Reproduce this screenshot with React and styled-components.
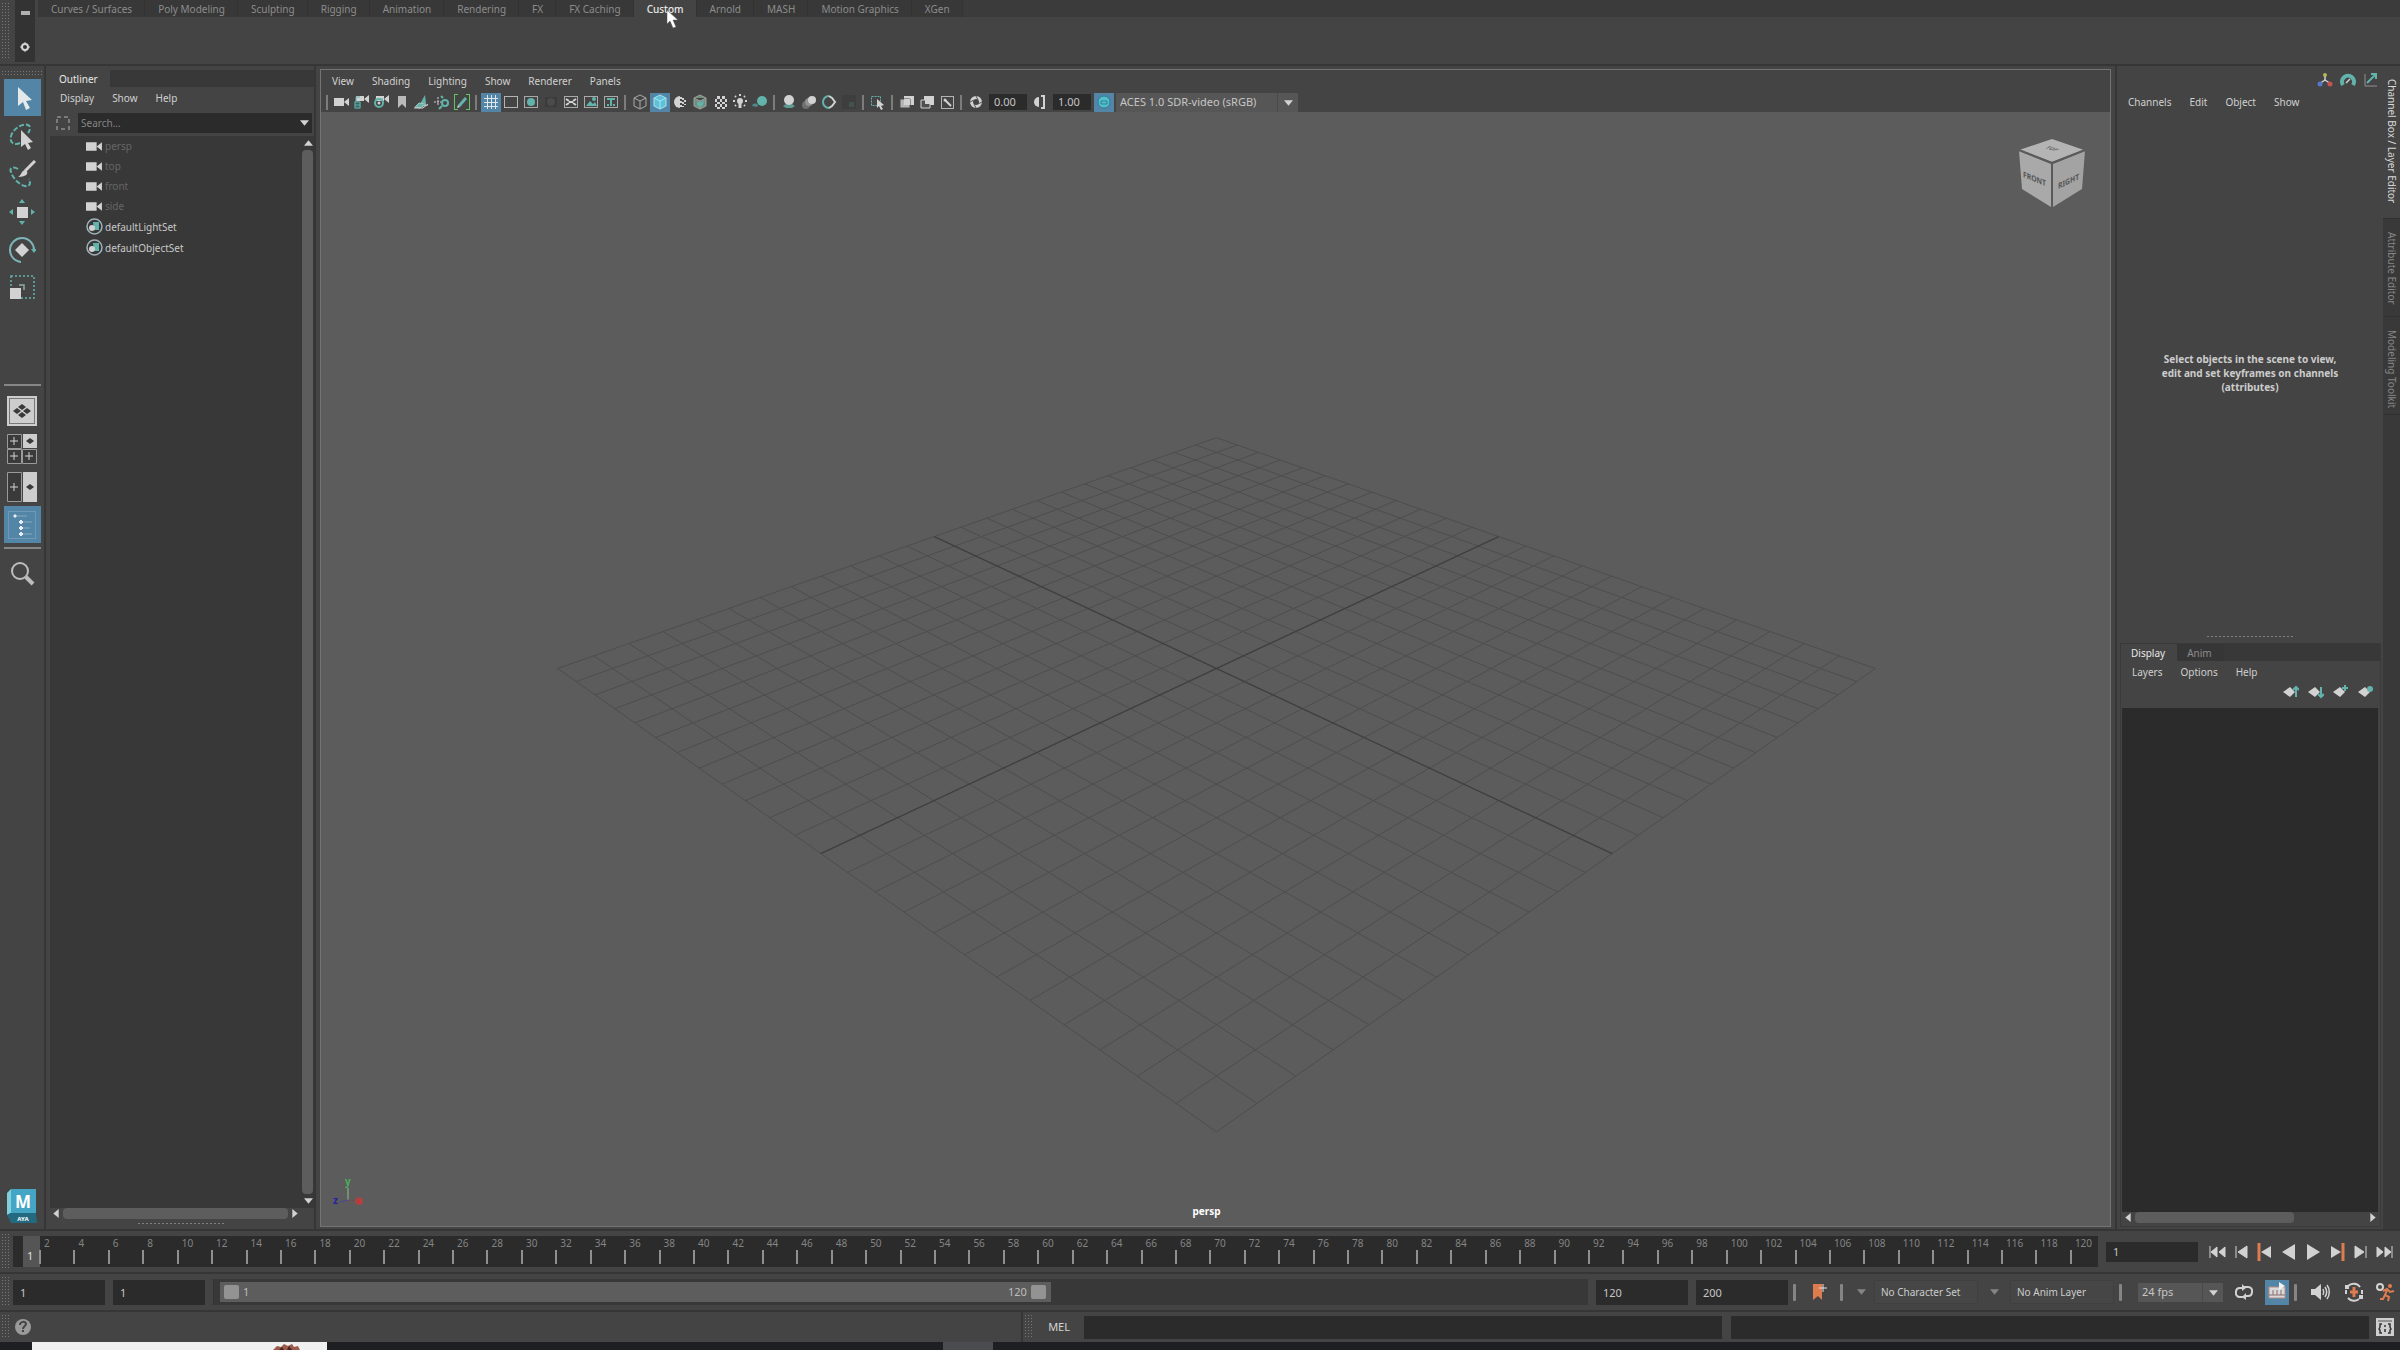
import { useState } from "react";
import styled, { createGlobalStyle } from "styled-components";

const GlobalStyle = createGlobalStyle`
  :root {
    --bg: #444444;
    --bg-dark: #383838;
    --bg-field: #2b2b2b;
    --bg-canvas: #5c5c5c;
    --line: #363636;
    --text: #c6c6c6;
    --text-dim: #8c8c8c;
    --accent: #5285a6;
    --main-font: "Noto Sans", "Open Sans", sans-serif;
  }
  * {
    box-sizing: border-box;
  }
  body {
    margin: 0;
    background-color: var(--bg);
    color: var(--text);
    font-family: var(--main-font);
    font-size: 11px;
    line-height: 16px;
  }
  button, input, select {
    margin: 0;
    padding: 0;
    border: 0;
    border-radius: 0;
    background: none;
    color: inherit;
    font: inherit;
    outline: none;
  }
  svg {
    display: block;
    flex: none;
  }
`;

const Page = styled.div`
  display: flex;
  flex-direction: column;
  height: 100vh;
  overflow: hidden;
`;

/* dotted drag handles */
const Grip = styled.div`
  flex: none;
  width: 8px;
  margin: 2px 2px 4px 1px;
  background-image: radial-gradient(#777 1px, transparent 1px);
  background-size: 3px 3px;
`;
const GripAcross = styled.div`
  height: 6px;
  width: 43px;
  background-image: radial-gradient(#777 1px, transparent 1px);
  background-size: 3px 3px;
`;
const SplitDots = styled.div`
  flex: none;
  width: 89px;
  height: 3px;
  margin: ${(props) => props.$top || 0}px auto 0;
  background-image: radial-gradient(#808080 1px, transparent 1px);
  background-size: 4px 3px;
`;

/* shelf */
const Shelf = styled.header`
  display: flex;
  flex: none;
  height: 66px;
  border-bottom: 2px solid var(--line);
`;
const ShelfSide = styled.div`
  display: flex;
  flex-direction: column;
  align-items: center;
  justify-content: space-between;
  width: 20px;
  height: 62px;
  margin: 0 3px 0 4px;
  padding: 5px 0 7px;
  background-color: #333333;
`;
const ShelfTabs = styled.nav`
  display: flex;
  flex: 1;
  height: 17px;
  background-color: #3b3b3b;
`;
const ShelfTab = styled.button`
  position: relative;
  padding: 0 12px 0 13px;
  height: 17px;
  line-height: 18px;
  font-size: 10px;
  border-right: 1px solid #333333;
  background-color: ${(props) => (props.$active ? "var(--bg)" : "#383838")};
  color: ${(props) => (props.$active ? "#e8e8e8" : "var(--text-dim)")};
  font-weight: ${(props) => (props.$active ? 500 : 400)};
`;
const Pointer = styled.svg`
  position: absolute;
  left: 32px;
  top: 9px;
  z-index: 2;
`;

const Main = styled.main`
  display: flex;
  flex: 1;
  min-height: 0;
`;

/* tool box */
const ToolBox = styled.aside`
  display: flex;
  flex-direction: column;
  align-items: center;
  flex: none;
  width: 46px;
  padding: 4px 0 6px;
  border-right: 2px solid var(--line);
`;
const Tools = styled.div`
  display: flex;
  flex-direction: column;
  gap: ${(props) => props.$gap || 0}px;
  margin-top: ${(props) => props.$top || 0}px;
`;
const ToolButton = styled.button`
  display: flex;
  align-items: center;
  justify-content: center;
  width: 37px;
  height: 37px;
  background-color: ${(props) => (props.$active ? "var(--accent)" : "transparent")};
`;
const ToolRule = styled.div`
  width: 37px;
  height: 2px;
  margin-top: ${(props) => props.$top}px;
  background-color: #878787;
`;
const Spacer = styled.div`
  flex: 1;
`;

/* menus */
const MenuBar = styled.nav`
  display: flex;
  align-items: center;
  flex: none;
  gap: 18px;
  height: ${(props) => props.$height}px;
  padding: 0 11px;
`;
const MenuButton = styled.button`
  font-size: 10px;
  line-height: 16px;
  color: #d0d0d0;
`;

/* outliner */
const Outliner = styled.section`
  display: flex;
  flex-direction: column;
  flex: none;
  width: 270px;
  padding: 4px 0 4px 3px;
  border-right: 2px solid var(--line);
`;
const TabStrip = styled.div`
  display: flex;
  flex: none;
  height: 17px;
  background-color: var(--bg-dark);
`;
const PanelTab = styled.button`
  padding: 0 12px 0 10px;
  height: 17px;
  font-size: 10px;
  background-color: ${(props) => (props.$active ? "var(--bg)" : "#363636")};
  color: ${(props) => (props.$active ? "#e8e8e8" : "var(--text-dim)")};
`;
const SearchRow = styled.label`
  display: flex;
  align-items: center;
  gap: 8px;
  height: 20px;
  margin: 4px 2px 3px 7px;
`;
const SearchField = styled.span`
  display: flex;
  align-items: center;
  flex: 1;
  height: 20px;
  padding: 0 3px;
  background-color: var(--bg-field);
  & > input {
    flex: 1;
    min-width: 0;
    font-size: 10px;
  }
  & > input::placeholder {
    color: #858585;
    opacity: 1;
  }
`;
const OutlinerBody = styled.div`
  display: flex;
  flex: 1;
  min-height: 0;
  margin-left: 1px;
  background-color: var(--bg-dark);
`;
const NodeList = styled.ul`
  flex: 1;
  margin: 0;
  padding: 0 0 0 36px;
  list-style: none;
`;
const NodeRow = styled.li`
  display: flex;
  align-items: center;
  gap: 2px;
  height: ${(props) => (props.$dim ? 20 : 21)}px;
  font-size: 10px;
  color: ${(props) => (props.$dim ? "#666666" : "#c8c8c8")};
`;
const ScrollColumn = styled.div`
  display: flex;
  flex-direction: column;
  align-items: center;
  width: 12px;
  padding: 4px 0;
  gap: 4px;
`;
const ScrollLine = styled.div`
  display: flex;
  align-items: center;
  flex: none;
  gap: 4px;
  height: 11px;
  margin: 0 ${(props) => props.$right}px 0 4px;
`;
const Thumb = styled.div`
  flex: ${(props) => props.$grow || 1} 1 0;
  align-self: stretch;
  width: ${(props) => (props.$column ? "11px" : "auto")};
  border-radius: 4px;
  background-color: #5d5d5d;
`;
const ThumbRest = styled.div`
  flex: ${(props) => props.$grow} 1 0;
`;

/* viewport */
const Viewport = styled.section`
  display: flex;
  flex-direction: column;
  flex: 1;
  min-width: 0;
  margin: 3px 0 2px 4px;
  border: 1px solid #747474;
`;
const ViewTools = styled.div`
  display: flex;
  align-items: center;
  flex: none;
  height: 20px;
  padding-left: 2px;
`;
const ViewButton = styled.button`
  display: flex;
  align-items: center;
  justify-content: center;
  flex: none;
  width: 20px;
  height: 19px;
  background-color: ${(props) => (props.$active ? "var(--accent)" : "transparent")};
`;
const ToolDivider = styled.div`
  flex: none;
  width: 2px;
  height: 15px;
  margin: 0 4px 0 3px;
  background-color: #7c7c7c;
`;
const NumberField = styled.input`
  flex: none;
  width: 38px;
  height: 16px;
  margin: 0 3px;
  padding-left: 5px;
  background-color: var(--bg-field);
`;
const SelectBox = styled.label`
  position: relative;
  display: block;
  flex: none;
  width: ${(props) => props.$width}px;
  height: 19px;
  margin-left: ${(props) => props.$left}px;
  background-color: #565656;
  & > select {
    appearance: none;
    width: 100%;
    height: 100%;
    padding: 0 24px 0 4px;
    border: 0;
  }
  & > svg {
    position: absolute;
    right: 5px;
    top: 7px;
    pointer-events: none;
  }
  &::after {
    content: "";
    position: absolute;
    right: 20px;
    top: 0;
    bottom: 0;
    width: 1px;
    background-color: #4a4a4a;
  }
`;
const Canvas = styled.div`
  position: relative;
  flex: 1;
  min-height: 0;
  background-color: var(--bg-canvas);
`;
const GridDrawing = styled.svg`
  width: 100%;
  height: 100%;
`;
const CubeHolder = styled.div`
  position: absolute;
  top: 25px;
  right: 23px;
`;
const AxisHolder = styled.div`
  position: absolute;
  left: 8px;
  bottom: 16px;
`;
const CameraName = styled.div`
  position: absolute;
  left: 0;
  right: 18px;
  bottom: 7px;
  text-align: center;
  font-size: 10px;
  font-weight: 700;
  color: #ffffff;
`;

/* channel box */
const ChannelBox = styled.section`
  display: flex;
  flex-direction: column;
  flex: none;
  width: 268px;
  margin-left: 4px;
  padding: 4px 0 2px;
  border-left: 2px solid var(--line);
`;
const CornerIcons = styled.div`
  display: flex;
  justify-content: flex-end;
  gap: 7px;
  height: 20px;
  padding: 2px 4px 0 0;
`;
const Message = styled.p`
  width: 190px;
  flex: 1;
  margin: 0 auto;
  padding-top: 238px;
  text-align: center;
  font-size: 10px;
  line-height: 14px;
  font-weight: 700;
  color: #cccccc;
`;
const LayerPanel = styled.div`
  display: flex;
  flex-direction: column;
  height: 584px;
  margin: 5px 2px 0 3px;
  padding-bottom: 3px;
  border: 1px solid #3a3a3a;
`;
const LayerTools = styled.div`
  display: flex;
  justify-content: flex-end;
  gap: 9px;
  height: 25px;
  padding: 0 6px 9px 0;
`;
const LayerList = styled.div`
  flex: 1;
  margin: 0 2px 0 1px;
  background-color: var(--bg-field);
`;
const SideTabs = styled.nav`
  display: flex;
  flex-direction: column;
  flex: none;
  width: 17px;
  background-color: #393939;
`;
const SideTab = styled.button`
  writing-mode: vertical-rl;
  width: 17px;
  height: ${(props) => props.$height}px;
  padding-top: 13px;
  text-align: left;
  font-size: 10px;
  line-height: 14px;
  border-bottom: 1px solid #303030;
  background-color: ${(props) => (props.$active ? "var(--bg)" : "#393939")};
  color: ${(props) => (props.$active ? "#d8d8d8" : "#868686")};
`;

/* bottom bars */
const BottomRow = styled.div`
  display: flex;
  align-items: center;
  flex: none;
  height: ${(props) => props.$height}px;
  border-top: 2px solid var(--line);
  & > ${Grip} {
    align-self: stretch;
    margin-right: 4px;
  }
`;
const TimeTrack = styled.div`
  display: flex;
  flex: 1;
  height: 31px;
  margin-right: 8px;
  background-color: var(--bg-field);
`;
const CurrentFrame = styled.div`
  width: 17px;
  margin-left: 10px;
  padding: 12px 0 0 4px;
  background-color: #555555;
  color: #e0e0e0;
`;
const Tick = styled.div`
  position: relative;
  flex: ${(props) => (props.$last ? "0 0 27px" : "1 1 0")};
  min-width: 0;
  padding-left: 4px;
  line-height: 14px;
  font-size: 10px;
  color: #848484;
  &::before {
    content: "";
    position: absolute;
    left: -1px;
    top: 14px;
    width: 2px;
    height: 14px;
    background-color: #8f8f8f;
  }
`;
const FrameField = styled.input`
  flex: none;
  width: 92px;
  height: ${(props) => props.$height || 25}px;
  margin-right: ${(props) => (props.$last ? 0 : 8)}px;
  padding-left: 7px;
  background-color: var(--bg-field);
`;
const Playback = styled.div`
  display: flex;
  align-items: center;
  flex: none;
  width: 194px;
  justify-content: space-between;
  padding: 0 6px 0 2px;
`;
const IconButton = styled.button`
  display: flex;
  align-items: center;
  justify-content: center;
  flex: none;
  width: ${(props) => props.$width || 20}px;
  height: 25px;
  background-color: ${(props) => (props.$active ? "var(--accent)" : "transparent")};
`;
const RangeTrack = styled.div`
  flex: 1;
  height: 26px;
  margin-right: 8px;
  padding: 3px 6px;
  background-color: var(--bg-dark);
  border-left: 1px solid #333333;
`;
const RangeBar = styled.div`
  display: flex;
  align-items: center;
  gap: 4px;
  width: 61%;
  height: 20px;
  padding: 0 5px 0 4px;
  background-color: #5d5d5d;
  color: #bdbdbd;
`;
const RangeHandle = styled.button`
  width: 15px;
  height: 14px;
  border-radius: 2px;
  background-color: #939393;
`;
const SetButton = styled.button`
  flex: none;
  width: 104px;
  height: 24px;
  padding-left: 6px;
  text-align: left;
  font-size: 10px;
  border: 1px solid #404040;
  background-color: #464646;
  color: #cccccc;
`;
const BarDivider = styled.div`
  flex: none;
  width: 3px;
  height: 17px;
  margin: 0 5px;
  border-radius: 1px;
  background-color: #858585;
`;
const HelpLine = styled.div`
  display: flex;
  align-items: center;
  flex: 1009 1 0;
  height: 100%;
  border-right: 2px solid var(--line);
`;
const CommandLine = styled.label`
  display: flex;
  align-items: center;
  flex: 686 1 0;
  & > span {
    flex: none;
    width: 48px;
    padding-left: 12px;
    color: #d4d4d4;
  }
  & > input {
    flex: 1;
    min-width: 0;
    height: 23px;
    background-color: var(--bg-field);
  }
`;
const CommandResult = styled.output`
  flex: 639 1 0;
  height: 23px;
  margin-left: 9px;
  background-color: var(--bg-field);
`;
const TaskBar = styled.footer`
  display: flex;
  flex: none;
  height: 8px;
  padding-left: 32px;
  background-color: #1d1f23;
`;
const TaskWindow = styled.div`
  display: flex;
  justify-content: flex-end;
  width: 295px;
  padding: 2px 27px 0 0;
  background-color: #f0f0f0;
`;
const TaskItem = styled.div`
  width: 50px;
  margin-left: 616px;
  background-color: #4a4c50;
`;

const W = "#d2d2d2";
const T = "#62b3ab";
const O = "#dd7c4f";

const Icon = ({ size = 16, box = 16, children }) => (
  <svg width={size} height={size} viewBox={`0 0 ${box} ${box}`} fill="none" aria-hidden="true">
    {children}
  </svg>
);

const Arrow = ({ dir = "down", color = W }) => {
  const points = {
    down: "0,0 10,0 5,6",
    up: "0,6 10,6 5,0",
    left: "6,0 6,10 0,5",
    right: "0,0 0,10 6,5",
  };
  const across = dir === "down" || dir === "up";
  return (
    <svg width={across ? 9 : 6} height={across ? 6 : 9} viewBox={across ? "0 0 10 6" : "0 0 6 10"}>
      <polygon points={points[dir]} fill={color} />
    </svg>
  );
};

const cameraShape = <path d="M0 4h10v8H0zM10 8l5-4v8z" fill={W} />;
const smallCamera = <path d="M2 2h8v5H2zM10 5l5-4v8z" fill={W} />;
const frame = <rect x="1.5" y="2.5" width="13" height="11" stroke="#a9a9a9" />;
const cube = (line, fill) => (
  <path d="M8 1l6 3v8l-6 3-6-3V4zM2 4l6 3 6-3M8 7v8" stroke={line} fill={fill} />
);

const viewIcons = {
  camera: cameraShape,
  lockCamera: (
    <>
      {smallCamera}
      <path d="M0 7h7v8H0z" fill="#3b5f5d" />
      <path d="M1 8h5v6H1zM1 11h5M2 8V3h4" stroke={T} />
    </>
  ),
  cameraAttr: (
    <>
      {smallCamera}
      <circle cx="5" cy="9" r="4" stroke={T} strokeWidth="2" />
      <path d="M1 5h8" stroke={T} />
      <circle cx="5" cy="9" r="1.5" fill={W} />
    </>
  ),
  bookmark: <path d="M4 2h8v12l-4-4-4 4z" fill="#b9b9b9" />,
  imagePlane: (
    <>
      <path d="M6 10l5-9 1 8z" fill={T} />
      <path d="M5 9l7 1-6 4-5-1zM8 12l6-1" fill={T} stroke="#a9c2bf" />
      <path d="M0 14h9l5-4" stroke={W} />
    </>
  ),
  panZoom: (
    <>
      <path d="M4 3v9M0 8h7" stroke={W} strokeDasharray="2 1" />
      <circle cx="11" cy="9" r="3" stroke={T} strokeWidth="2" />
      <path d="M9 4l-2-2M8 12l-3 3" stroke={T} strokeWidth="2" />
    </>
  ),
  pencil: (
    <>
      <path d="M4 0H0v16h4M12 0h4v16h-4" stroke="#64c264" strokeWidth="2" />
      <path d="M5 12l7-8" stroke={T} strokeWidth="3" />
      <path d="M3 14l1-3 2 2z" fill={W} />
    </>
  ),
  grid: (
    <path d="M1 4.5h14M1 8.5h14M1 12.5h14M4.5 1v14M8.5 1v14M12.5 1v14" stroke="#dde6ec" />
  ),
  filmGate: <rect x="1.5" y="2.5" width="13" height="11" stroke="#b4b4b4" />,
  resGate: (
    <>
      {frame}
      <circle cx="8" cy="8" r="4" fill={T} />
    </>
  ),
  gateMask: (
    <>
      <rect x="2" y="3" width="12" height="10" fill="#3b3b3b" />
      <circle cx="8" cy="8" r="4" fill="#4b4b4b" />
    </>
  ),
  fieldChart: (
    <>
      {frame}
      <path d="M3 5l3 2M13 5l-3 2M3 11l3-2M13 11l-3-2M6 8h4" stroke={W} strokeWidth="2" />
    </>
  ),
  safeAction: (
    <>
      {frame}
      <path d="M3 12l4-5 3 3 2-2 2 4z" fill={T} />
      <circle cx="11" cy="5" r="2" fill={T} />
    </>
  ),
  safeTitle: (
    <>
      {frame}
      <path d="M4 5h8M8 5v7M4 11h2M10 11h2" stroke={T} strokeWidth="2" />
    </>
  ),
  wireframe: cube("#aaaaaa", "none"),
  shaded: (
    <>
      <path d="M8 1l6 3v8l-6 3-6-3V4z" fill="#5fc0d8" />
      {cube("#a8e4f2", "none")}
    </>
  ),
  halfShaded: (
    <>
      <path d="M8 2a6 6 0 000 12z" fill={W} />
      <path d="M9 3v11M11 4v9M13 6v5" stroke={W} strokeDasharray="2 2" strokeWidth="2" />
    </>
  ),
  texturedCube: (
    <>
      {cube("#a0a0a0", "#6f8f7b")}
      <path d="M5 7l3 2 4-3-1 5-3 2-3-2z" fill={T} />
    </>
  ),
  checker: (
    <path
      d="M5 2h3v3H5zM10 2h3v3h-3zM3 5h2v3H3zM8 5h2v3H8zM13 5h2v3h-2zM5 8h3v2H5zM10 8h3v2h-3zM3 10h2v3H3zM8 10h2v3H8zM13 10h2v3h-2zM5 13h3v2H5zM10 13h3v2h-3z"
      fill={W}
    />
  ),
  light: (
    <>
      <circle cx="8" cy="7" r="3" fill={W} />
      <path d="M8 9v5" stroke={W} strokeWidth="3" />
      <path d="M8 0v2M1 7h2M13 7h2M3 2l1 1M13 2l-1 1M3 12l1-1M13 12l-1-1" stroke={W} strokeWidth="2" />
    </>
  ),
  shadow: (
    <>
      <circle cx="10" cy="7" r="5" fill={T} />
      <path d="M0 12c1-3 4-3 6-1l-1 2z" fill="#4f8a86" />
    </>
  ),
  ambient: (
    <>
      <path d="M2 12l3-2h6l3 2-3 2H5z" fill="#5f9a94" />
      <circle cx="8" cy="6" r="5" fill={W} />
    </>
  ),
  motionBlur: (
    <>
      <circle cx="5" cy="11" r="4" fill="#6f6f6f" />
      <circle cx="8" cy="8" r="4" fill="#919191" />
      <circle cx="11" cy="6" r="4" fill={W} />
    </>
  ),
  multisample: (
    <>
      <path d="M8 2a6 6 0 000 12" stroke={T} strokeWidth="2" />
      <path d="M8 2l3 2 3 4-3 4-3 2" stroke={W} strokeWidth="2" />
    </>
  ),
  depth: (
    <>
      <path d="M1 1h14v14H1z" fill="#3e3e3e" />
      <path d="M8 8h5v5H8z" fill="#41524f" />
    </>
  ),
  isolate: (
    <>
      <rect x="1.5" y="2.5" width="9" height="9" stroke={T} strokeDasharray="2 1" />
      <path d="M7 5l7 6-3 1 2 3-2 1-2-4-2 2z" fill={W} />
    </>
  ),
  xray: (
    <>
      <path d="M5 2h10v9H5z" fill={W} />
      <path d="M1 5h10v9H1z" fill="#b6b6b6" stroke="#4a4a4a" />
      <path d="M5 5h6v6H5z" fill={W} />
    </>
  ),
  xrayJoints: (
    <>
      <path d="M5 2h10v9H5z" fill={W} />
      <path d="M2 6h9v8H2z" fill="#505050" stroke={W} />
      <path d="M6 6h5v4H6z" fill={W} />
    </>
  ),
  xrayActive: (
    <>
      <rect x="2.5" y="2.5" width="12" height="12" stroke="#b4b4b4" />
      <path d="M6 6l6 6" stroke={W} strokeWidth="2" />
      <circle cx="6" cy="6" r="1.5" fill={W} />
    </>
  ),
  exposure: (
    <>
      <circle cx="8" cy="8" r="4.5" stroke={W} strokeWidth="3" />
      <path d="M8 2l2 4M14 8l-4 2M8 14l-2-4M2 8l4-2" stroke="#555" />
    </>
  ),
  gamma: (
    <>
      <path d="M7 3a5 5 0 000 10z" fill={W} />
      <path d="M9 2h3v12H9" stroke={W} strokeWidth="2" />
    </>
  ),
  color: (
    <>
      <circle cx="8" cy="8" r="6" fill="#53c0d0" stroke="#2f7f93" />
      <path d="M5 7h6v3H5z" stroke="#2f7f93" />
    </>
  ),
};

const viewGroups = [
  ["camera", "lockCamera", "cameraAttr", "bookmark", "imagePlane", "panZoom", "pencil"],
  ["grid", "filmGate", "resGate", "gateMask", "fieldChart", "safeAction", "safeTitle"],
  ["wireframe", "shaded", "halfShaded", "texturedCube", "checker", "light", "shadow"],
  ["ambient", "motionBlur", "multisample", "depth"],
  ["isolate"],
  ["xray", "xrayJoints", "xrayActive"],
];

const toolIcons = {
  Select: <path d="M10 3l14 13-6 1 4 7-4 2-3-8-5 4z" fill="#e4e9ec" />,
  Lasso: (
    <>
      <path d="M12 21C6 24 1 20 3 14 5 7 14 1 20 3c3 1 2 6 0 8" stroke={T} strokeWidth="2" strokeDasharray="5 2" />
      <path d="M13 8l12 12-5 1 3 5-3 2-3-6-4 3z" fill={W} />
    </>
  ),
  "Paint select": (
    <>
      <path d="M10 9C5 6 1 8 3 12c1 5 8 13 14 14 5 1 6-3 4-7" stroke={T} strokeWidth="2" strokeDasharray="5 2" />
      <path d="M27 1L17 11" stroke={W} strokeWidth="3" />
      <path d="M18 10c3 3 1 7-8 7 4-2 3-7 8-7z" fill={W} />
    </>
  ),
  Move: (
    <>
      <path d="M9 9h11v11H9z" fill={W} />
      <path d="M14 1l3 4h-6zM14 27l3-4h-6zM1 14l4-3v6zM27 14l-4-3v6z" fill={T} />
    </>
  ),
  Rotate: (
    <>
      <path d="M14 7l7 7-7 7-7-7z" fill={W} />
      <path d="M13 26A12 12 0 1126 14" stroke="#7db4b8" strokeWidth="2" />
      <path d="M23 13h6l-3 4z" fill={T} />
    </>
  ),
  Scale: (
    <>
      <rect x="3" y="2" width="23" height="22" stroke={T} strokeWidth="1.5" strokeDasharray="2 2" />
      <path d="M2 14h11v11H2z" fill={W} />
      <path d="M11 11h5v5" stroke="#8fa9a7" strokeWidth="1.5" />
    </>
  ),
};

const diamond = (x, y, r = 3) => `M${x - r} ${y}l${r} -${r - 1}l${r} ${r - 1}l-${r} ${r - 1}z`;
const plus = (x, y) => `M${x - 4} ${y}h8M${x} ${y - 4}v8`;

const layoutIcons = {
  "Single view": (
    <>
      <path d="M0 0h30v30H0z" fill="#cdcdcd" />
      <rect x="2.5" y="2.5" width="25" height="25" stroke="#777" />
      <path d={diamond(15, 11, 4) + diamond(10, 15, 4) + diamond(20, 15, 4) + diamond(15, 19, 4)} fill="#3a3a3a" />
    </>
  ),
  "Four view": (
    <>
      <path d="M.5.5h14v14H.5zM.5 15.5h14v14H.5zM15.5 15.5h14v14h-14z" fill="#3a3a3a" stroke="#9a9a9a" />
      <path d="M16 0h14v14H16z" fill="#cdcdcd" />
      <path d={plus(7, 7) + plus(7, 22) + plus(22, 22)} stroke={W} />
      <path d={diamond(23, 7, 4)} fill="#3a3a3a" />
    </>
  ),
  "Two view": (
    <>
      <path d="M.5.5h14v29H.5z" fill="#3a3a3a" stroke="#9a9a9a" />
      <path d="M16 0h14v30H16z" fill="#cdcdcd" />
      <path d={plus(7, 15)} stroke={W} />
      <path d={diamond(23, 15, 4)} fill="#3a3a3a" />
    </>
  ),
  "Outliner view": (
    <>
      <rect x="1.5" y="1.5" width="27" height="27" stroke="#6f9ab7" />
      <path d="M8 6h12M14 12h11M14 18h9M14 24h11" stroke="#83aac4" />
      <path d="M6 6l2-2 2 2-2 2z" fill="#e6eef3" />
      <path d="M12 12l2-2 2 2-2 2zM12 18l2-2 2 2-2 2zM12 24l2-2 2 2-2 2z" fill="#e6eef3" stroke="#e6eef3" />
    </>
  ),
};

const playIcons = {
  "Go to start": <path d="M2 4v12M9 5v10l-6-5zM17 5v10l-6-5z" fill={W} stroke={W} />,
  "Step back frame": <path d="M4 4v12M15 4v12L6 10z" fill={W} stroke={W} />,
  "Step back key": (
    <>
      <path d="M16 4v12L6 10z" fill={W} />
      <path d="M4 1v18" stroke={O} strokeWidth="3" />
    </>
  ),
  "Play backwards": <path d="M16 2v16L3 10z" fill={W} />,
  "Play forwards": <path d="M4 2v16l13-8z" fill={W} />,
  "Step forward key": (
    <>
      <path d="M4 4v12l10-6z" fill={W} />
      <path d="M16 1v18" stroke={O} strokeWidth="3" />
    </>
  ),
  "Step forward frame": <path d="M16 4v12M5 4v12l9-6z" fill={W} stroke={W} />,
  "Go to end": <path d="M18 4v12M11 5v10l6-5zM3 5v10l6-5z" fill={W} stroke={W} />,
};

const layerBase = <path d="M0 9l7-5 5 5-5 5z" fill={W} />;
const layerIcons = {
  "Move layer up": (
    <>
      {layerBase}
      <path d="M13 14V4M10 7l3-3 3 3" stroke={T} strokeWidth="2" />
    </>
  ),
  "Move layer down": (
    <>
      {layerBase}
      <path d="M13 4v10M10 11l3 3 3-3" stroke={T} strokeWidth="2" />
    </>
  ),
  "New empty layer": (
    <>
      {layerBase}
      <path d="M12 2v6M9 5h6" stroke={T} strokeWidth="2" />
    </>
  ),
  "New layer from selected": (
    <>
      {layerBase}
      <circle cx="12" cy="6" r="3" fill={T} />
    </>
  ),
};

const shelfTabs = [
  "Curves / Surfaces",
  "Poly Modeling",
  "Sculpting",
  "Rigging",
  "Animation",
  "Rendering",
  "FX",
  "FX Caching",
  "Custom",
  "Arnold",
  "MASH",
  "Motion Graphics",
  "XGen",
];

const nodes = [
  { name: "persp", camera: true },
  { name: "top", camera: true },
  { name: "front", camera: true },
  { name: "side", camera: true },
  { name: "defaultLightSet" },
  { name: "defaultObjectSet" },
];

const ticks = Array.from({ length: 60 }, (_, i) => (i + 1) * 2);

// ground plane: u and v run from -1 to 1 along the two world axes
const project = (u, v) => {
  const s = (u - v) / 2;
  const t = (u + v) / 2;
  const depth = 1 - 0.335 * t;
  return [896 + (659.5 * s) / depth, 557 + (308.4 * t) / depth];
};

const gridLines = [];
for (let i = -12; i <= 12; i++) {
  gridLines.push({ axis: i === 0, a: project(i / 12, -1), b: project(i / 12, 1) });
  gridLines.push({ axis: i === 0, a: project(-1, i / 12), b: project(1, i / 12) });
}
gridLines.sort((a, b) => a.axis - b.axis);

function GroundGrid() {
  return (
    <GridDrawing viewBox="0 0 1790 1115" role="img" aria-label="Ground grid">
      {gridLines.map(({ axis, a, b }, i) => (
        <line
          key={i}
          x1={a[0]}
          y1={a[1]}
          x2={b[0]}
          y2={b[1]}
          stroke={axis ? "#3f3f3f" : "#4d4d4d"}
          strokeWidth={axis ? 1.3 : 1}
        />
      ))}
    </GridDrawing>
  );
}

function ViewCube() {
  return (
    <svg width="70" height="72" viewBox="0 0 70 72" fontFamily="Noto Sans" fontSize="8" fontWeight="700">
      <path d="M35 2l32 11-32 12L2 13z" fill="#b4b4b4" />
      <path d="M2 14l32 13v43L5 52z" fill="#a9a9a9" />
      <path d="M68 14L36 27v43l29-18z" fill="#a3a3a3" />
      <path d="M2 13l33 13 33-13M35 26v43" stroke="#5a5a5a" strokeWidth="2" fill="none" />
      <text transform="matrix(.85 .35 0 1 6 40)" fill="#555555">FRONT</text>
      <text transform="matrix(.85 -.4 0 1 41 52)" fill="#555555">RIGHT</text>
      <text transform="matrix(.75 .25 -.8 .4 28 11)" fill="#6a6a6a" fontSize="7">TOP</text>
    </svg>
  );
}

function AxisGizmo() {
  return (
    <svg width="40" height="42" viewBox="0 -8 40 42" fontFamily="Noto Sans" fontSize="10" fontWeight="700">
      <path d="M19 12v12" stroke="#8cc08c" />
      <path d="M19 24l-8 2" stroke="#4646a8" />
      <path d="M19 24l8 1" stroke="#7a4a4a" />
      <circle cx="30" cy="25" r="4" fill="#a04848" />
      <text x="16" y="9" fill="#4cae5a">y</text>
      <text x="4" y="28" fill="#2222a8">z</text>
      <text x="28" y="28" fill="#d03030" fontSize="8">x</text>
    </svg>
  );
}

const Menu = ({ items, height, label }) => (
  <MenuBar $height={height} aria-label={label}>
    {items.map((item) => (
      <MenuButton key={item}>{item}</MenuButton>
    ))}
  </MenuBar>
);

export default function App() {
  const [shelf, setShelf] = useState("Custom");
  const [tool, setTool] = useState("Select");
  const [layout, setLayout] = useState("Outliner view");
  const [search, setSearch] = useState("");

  return (
    <>
      <GlobalStyle />
      <Page>
        <Shelf>
          <Grip />
          <ShelfSide>
            <svg width="9" height="15" viewBox="0 0 9 15">
              <path d="M0 6h9v4H0z" fill="#b0b0b0" />
            </svg>
            <svg width="10" height="16" viewBox="0 0 10 16">
              <circle cx="5" cy="8" r="3" fill="none" stroke={W} strokeWidth="2" />
              <path d="M5 3v2M5 11v2M0 8h2M8 8h2" stroke={W} />
            </svg>
          </ShelfSide>
          <ShelfTabs>
            {shelfTabs.map((name) => (
              <ShelfTab key={name} $active={shelf === name} onClick={() => setShelf(name)}>
                {name}
                {name === "Custom" && (
                  <Pointer width="12" height="20" viewBox="0 0 12 20">
                    <path d="M1 1v14l3-3 3 7 3-1-3-7h5z" fill="#fff" stroke="#555" strokeWidth=".5" />
                  </Pointer>
                )}
              </ShelfTab>
            ))}
          </ShelfTabs>
        </Shelf>

        <Main>
          <ToolBox>
            <GripAcross />
            <Tools $top={3} $gap={1}>
              {Object.keys(toolIcons).map((name) => (
                <ToolButton key={name} aria-label={name} $active={tool === name} onClick={() => setTool(name)}>
                  <Icon size={28} box={28}>{toolIcons[name]}</Icon>
                </ToolButton>
              ))}
            </Tools>
            <ToolRule $top={78} />
            <Tools $top={6} $gap={1}>
              {Object.keys(layoutIcons).map((name) => (
                <ToolButton key={name} aria-label={name} $active={layout === name} onClick={() => setLayout(name)}>
                  <Icon size={30} box={30}>{layoutIcons[name]}</Icon>
                </ToolButton>
              ))}
            </Tools>
            <ToolRule $top={4} />
            <Tools $top={5}>
              <ToolButton aria-label="Find">
                <Icon size={26} box={26}>
                  <circle cx="11" cy="11" r="8" stroke="#bdbdbd" strokeWidth="2" />
                  <path d="M17 17l7 7" stroke="#bdbdbd" strokeWidth="4" />
                </Icon>
              </ToolButton>
            </Tools>
            <Spacer />
            <svg width="30" height="34" viewBox="0 0 30 34" fontFamily="Noto Sans" fontWeight="700" textAnchor="middle">
              <path d="M0 4l4-4v24l-4 2z" fill="#7fd0dd" />
              <path d="M4 0h25v24H4z" fill="#44a6c4" />
              <path d="M0 26l4-2h25l1 10H4z" fill="#23697f" />
              <text x="16" y="19" fontSize="17" fill="#fff">M</text>
              <text x="16" y="32" fontSize="6" fill="#fff">AYA</text>
            </svg>
          </ToolBox>

          <Outliner>
            <TabStrip>
              <PanelTab $active>Outliner</PanelTab>
            </TabStrip>
            <Menu items={["Display", "Show", "Help"]} height={22} label="Outliner" />
            <SearchRow>
              <Icon size={14} box={14}>
                <rect x="1" y="1" width="12" height="12" stroke="#7a7a7a" strokeWidth="2" strokeDasharray="4 3" />
              </Icon>
              <SearchField>
                <input
                  type="text"
                  aria-label="Search"
                  placeholder="Search..."
                  value={search}
                  onChange={(e) => setSearch(e.target.value)}
                />
                <Arrow />
              </SearchField>
            </SearchRow>
            <OutlinerBody>
              <NodeList>
                {nodes.map(({ name, camera }) => (
                  <NodeRow key={name} $dim={camera}>
                    {camera ? (
                      <Icon size={17}>{cameraShape}</Icon>
                    ) : (
                      <Icon size={17} box={17}>
                        <circle cx="8.5" cy="8.5" r="7.5" stroke="#9fb2b8" strokeWidth="1.5" />
                        <path d="M7 4h6v8H8z" fill={T} />
                        <circle cx="6" cy="10" r="3" fill={W} />
                      </Icon>
                    )}
                    {name}
                  </NodeRow>
                ))}
              </NodeList>
              <ScrollColumn>
                <Arrow dir="up" />
                <Thumb $column />
                <Arrow />
              </ScrollColumn>
            </OutlinerBody>
            <ScrollLine $right={16}>
              <Arrow dir="left" />
              <Thumb />
              <Arrow dir="right" />
            </ScrollLine>
            <SplitDots $top={3} />
          </Outliner>

          <Viewport>
            <Menu
              items={["View", "Shading", "Lighting", "Show", "Renderer", "Panels"]}
              height={22}
              label="Viewport"
            />
            <ViewTools>
              {viewGroups.map((group) => [
                <ToolDivider key={`${group[0]}-divider`} />,
                ...group.map((name) => (
                  <ViewButton key={name} aria-label={name} $active={name === "grid" || name === "shaded"}>
                    <Icon>{viewIcons[name]}</Icon>
                  </ViewButton>
                )),
              ])}
              <ToolDivider />
              <ViewButton aria-label="Exposure">
                <Icon>{viewIcons.exposure}</Icon>
              </ViewButton>
              <NumberField aria-label="Exposure value" defaultValue="0.00" />
              <ViewButton aria-label="Gamma">
                <Icon>{viewIcons.gamma}</Icon>
              </ViewButton>
              <NumberField aria-label="Gamma value" defaultValue="1.00" />
              <ViewButton aria-label="Color management" $active>
                <Icon>{viewIcons.color}</Icon>
              </ViewButton>
              <SelectBox $width={182} $left={2}>
                <select aria-label="View transform" defaultValue="aces">
                  <option value="aces">ACES 1.0 SDR-video (sRGB)</option>
                </select>
                <Arrow />
              </SelectBox>
            </ViewTools>
            <Canvas>
              <GroundGrid />
              <CubeHolder>
                <ViewCube />
              </CubeHolder>
              <AxisHolder>
                <AxisGizmo />
              </AxisHolder>
              <CameraName>persp</CameraName>
            </Canvas>
          </Viewport>

          <ChannelBox>
            <CornerIcons>
              <Icon>
                <path d="M8 8V2M8 8l-6 4M8 8l6 4" stroke={W} strokeWidth="1.5" />
                <circle cx="8" cy="3" r="2" fill="#b9b55e" />
                <circle cx="3" cy="12" r="2.5" fill="#5577cc" />
                <circle cx="13" cy="12" r="2.5" fill="#c75252" />
              </Icon>
              <Icon>
                <path d="M3 13A6 6 0 1113 13" stroke={T} strokeWidth="4" />
                <path d="M6 11l4-4" stroke={W} strokeWidth="1.5" />
              </Icon>
              <Icon>
                <path d="M2 2v12h12" stroke="#8f8f8f" />
                <path d="M4 11l8-8M8 2h5v5" stroke={T} strokeWidth="2" />
              </Icon>
            </CornerIcons>
            <Menu items={["Channels", "Edit", "Object", "Show"]} height={24} label="Channel box" />
            <Message>Select objects in the scene to view, edit and set keyframes on channels (attributes)</Message>
            <SplitDots />
            <LayerPanel>
              <TabStrip>
                <PanelTab $active>Display</PanelTab>
                <PanelTab>Anim</PanelTab>
              </TabStrip>
              <Menu items={["Layers", "Options", "Help"]} height={22} label="Layers" />
              <LayerTools>
                {Object.keys(layerIcons).map((name) => (
                  <MenuButton key={name} aria-label={name}>
                    <Icon>{layerIcons[name]}</Icon>
                  </MenuButton>
                ))}
              </LayerTools>
              <LayerList />
              <ScrollLine $right={4}>
                <Arrow dir="left" />
                <Thumb $grow={7} />
                <ThumbRest $grow={3} />
                <Arrow dir="right" />
              </ScrollLine>
            </LayerPanel>
          </ChannelBox>

          <SideTabs>
            <SideTab $active $height={153}>Channel Box / Layer Editor</SideTab>
            <SideTab $height={98}>Attribute Editor</SideTab>
            <SideTab $height={98}>Modeling Toolkit</SideTab>
          </SideTabs>
        </Main>

        <BottomRow $height={43}>
          <Grip />
          <TimeTrack>
            <CurrentFrame>1</CurrentFrame>
            {ticks.map((frameNumber) => (
              <Tick key={frameNumber} $last={frameNumber === 120}>
                {frameNumber}
              </Tick>
            ))}
          </TimeTrack>
          <FrameField $height={20} aria-label="Current frame" defaultValue="1" />
          <Playback>
            {Object.keys(playIcons).map((name) => (
              <IconButton key={name} aria-label={name}>
                <Icon size={20} box={20}>{playIcons[name]}</Icon>
              </IconButton>
            ))}
          </Playback>
        </BottomRow>

        <BottomRow $height={38}>
          <Grip />
          <FrameField aria-label="Animation start" defaultValue="1" />
          <FrameField aria-label="Playback start" defaultValue="1" />
          <RangeTrack>
            <RangeBar>
              <RangeHandle aria-label="Range start" />
              1
              <Spacer />
              120
              <RangeHandle aria-label="Range end" />
            </RangeBar>
          </RangeTrack>
          <FrameField aria-label="Playback end" defaultValue="120" />
          <FrameField $last aria-label="Animation end" defaultValue="200" />
          <BarDivider />
          <IconButton $width={34} aria-label="Add bookmark">
            <Icon size={18} box={18}>
              <path d="M4 1h9v16l-4-4-5 4z" fill={O} />
              <path d="M14 1v8M10 5h8" stroke="#e3e3e3" />
            </Icon>
          </IconButton>
          <BarDivider />
          <IconButton $width={26} aria-label="Character set menu">
            <Arrow color="#858585" />
          </IconButton>
          <SetButton>No Character Set</SetButton>
          <IconButton $width={32} aria-label="Anim layer menu">
            <Arrow color="#858585" />
          </IconButton>
          <SetButton>No Anim Layer</SetButton>
          <BarDivider />
          <SelectBox $width={85} $left={11}>
            <select aria-label="Frame rate" defaultValue="24">
              <option value="24">24 fps</option>
            </select>
            <Arrow />
          </SelectBox>
          <IconButton $width={42} aria-label="Loop">
            <Icon size={18} box={18}>
              <path d="M11 14H5a4 4 0 01-4-5c0-3 2-4 4-4h3M8 4h5a4 4 0 014 5c0 3-2 4-4 4h-2" stroke={W} strokeWidth="2" />
              <path d="M7 1l4 4-4 3zM11 10v7l-4-3z" fill={W} />
            </Icon>
          </IconButton>
          <IconButton $width={24} $active aria-label="Cached playback">
            <Icon size={20} box={20}>
              <path d="M2 5h16v11H2z" fill="#d9d9d9" stroke="#b58d84" />
              <path d="M2 13h16M6 8v5M10 8v5M14 8v5" stroke="#8b6d6d" />
              <path d="M12 0l6 4-6 4z" fill="#eef2f4" />
            </Icon>
          </IconButton>
          <BarDivider />
          <IconButton $width={36} aria-label="Sound">
            <Icon size={20} box={20}>
              <path d="M1 7h4l6-5v16l-6-5H1z" fill={W} />
              <path d="M13 7c1 2 1 4 0 6M15 5c2 3 2 7 0 10M17 3c3 4 3 10 0 14" stroke={W} strokeWidth="1.5" />
            </Icon>
          </IconButton>
          <IconButton $width={32} aria-label="Auto keyframe">
            <Icon size={20} box={20}>
              <path d="M4 4a8 8 0 0112 1M18 8v4M15 17a8 8 0 01-11-1M2 12V8" stroke={W} strokeWidth="2" />
              <path d="M10 5v10M6 10h8" stroke={O} strokeWidth="3" />
              <path d="M1 3h4v4H1zM15 13h4v4h-4z" fill={W} />
            </Icon>
          </IconButton>
          <IconButton $width={30} aria-label="Preferences">
            <Icon size={20} box={20}>
              <circle cx="5" cy="5" r="3" stroke={W} strokeWidth="2" />
              <circle cx="15" cy="4" r="2" fill={O} />
              <path d="M8 9l4-2 3 3 4-1M12 8l-2 5 4 2-1 4M10 13l-2 4H5" stroke={O} strokeWidth="2" />
            </Icon>
          </IconButton>
        </BottomRow>

        <BottomRow $height={32}>
          <Grip />
          <HelpLine>
            <IconButton aria-label="Help">
              <svg width="18" height="18" viewBox="0 0 18 18">
                <circle cx="9" cy="9" r="8" fill="#9a9a9a" />
                <path d="M6 7c0-4 6-4 6-1 0 2-3 2-3 5M9 12v2" stroke="#444" strokeWidth="2" fill="none" />
              </svg>
            </IconButton>
          </HelpLine>
          <Grip />
          <CommandLine>
            <span>MEL</span>
            <input type="text" />
          </CommandLine>
          <CommandResult />
          <IconButton $width={31} aria-label="Script editor">
            <Icon size={18} box={18}>
              <path d="M0 0h18v18H0z" fill="#cfcfcf" />
              <path d="M2 3h14" stroke="#555" />
              <path d="M6 6H4v3L3 11l1 1v3h2M12 6h2v3l1 2-1 1v3h-2M9 7v2M9 11v3" stroke="#333" strokeWidth="1.5" />
            </Icon>
          </IconButton>
        </BottomRow>

        <TaskBar>
          <TaskWindow>
            <svg width="27" height="6" viewBox="0 0 27 6">
              <path d="M1 5l3-3 4 1 3-3 4 2 4-2 2 3 4-1 2 4H0z" fill="#9a5a4c" />
              <path d="M6 6l3-3 2 3zM14 6l2-4 3 4z" fill="#4a1f1c" />
            </svg>
          </TaskWindow>
          <TaskItem />
        </TaskBar>
      </Page>
    </>
  );
}
